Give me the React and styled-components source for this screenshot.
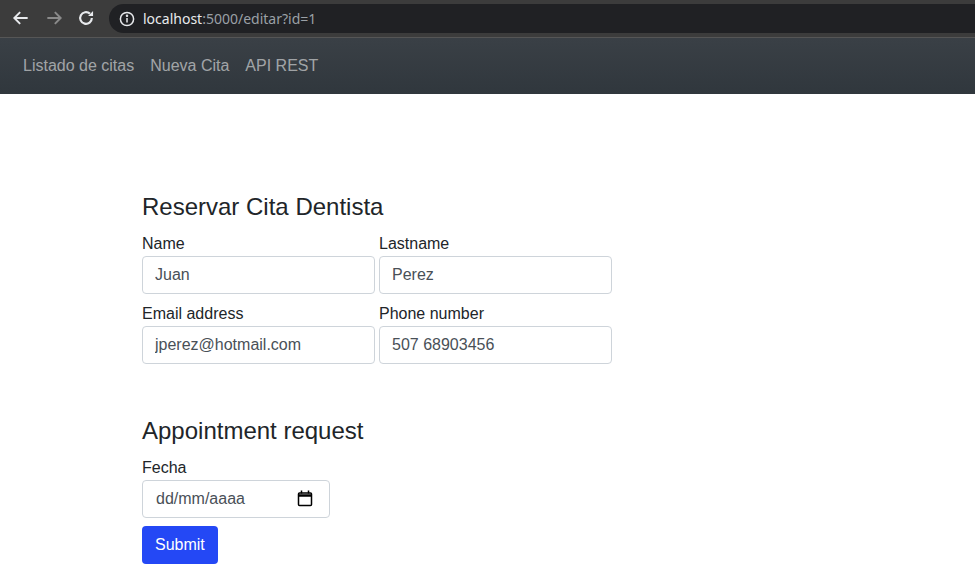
import React from "react";
import styled, { createGlobalStyle } from "styled-components";

const GlobalStyle = createGlobalStyle`
  body {
    margin: 0;
    background: #fff;
    font-family: "Liberation Sans", Arial, sans-serif;
    color: #212529;
  }
`;

const Chrome = styled.div`
  height: 38px;
  background: #3c3c3c;
  border-bottom: 1px solid #565656;
  display: flex;
  align-items: flex-start;
  box-sizing: border-box;
  padding: 4px 0 0 10px;
`;

const NavButton = styled.div`
  width: 22px;
  height: 28px;
  margin-right: ${p => p.$gap || 10}px;
  display: flex;
  align-items: center;
  justify-content: center;
  color: ${p => (p.$dim ? "#8a8a8a" : "#e8eaed")};
`;

const UrlBar = styled.div`
  flex: 1;
  height: 29px;
  background: #202124;
  border-radius: 15px 0 0 15px;
  display: flex;
  align-items: center;
  padding-left: 10px;
  font-family: "Noto Sans", "Open Sans", sans-serif;
  font-size: 14px;
  color: #9aa0a6;
`;

const Host = styled.span`
  color: #e8eaed;
  margin-left: 8px;
`;

const Navbar = styled.nav`
  height: 56px;
  background: linear-gradient(180deg, #3a4046 0%, #30373d 100%);
  display: flex;
  align-items: center;
  padding-left: 15px;
`;

const NavLink = styled.a`
  color: rgba(255, 255, 255, 0.55);
  font-size: 16px;
  padding: 0 8px;
  text-decoration: none;
`;

const Main = styled.main`
  padding: 99px 0 0 142px;
`;

const Heading = styled.h4`
  margin: 0 0 10px;
  font-size: 24px;
  font-weight: 500;
  line-height: 1.2;
`;

const Section = styled.section`
  margin-bottom: ${p => p.$after || 0}px;
`;

const Grid = styled.div`
  display: grid;
  grid-template-columns: 233px 233px;
  column-gap: 4px;
  row-gap: 8px;
`;

const Field = styled.div`
  display: flex;
  flex-direction: column;
`;

const Label = styled.label`
  font-size: 16px;
  line-height: 24px;
`;

const Input = styled.input`
  box-sizing: border-box;
  width: 233px;
  height: 38px;
  padding: 6px 12px;
  font-family: "Liberation Sans", Arial, sans-serif;
  font-size: 16px;
  color: #495057;
  border: 1px solid #ced4da;
  border-radius: 4px;
  background: #fff;
  outline: none;
`;

const DateBox = styled.div`
  box-sizing: border-box;
  width: 188px;
  height: 38px;
  padding: 0 16px 0 13px;
  display: flex;
  align-items: center;
  justify-content: space-between;
  font-size: 16px;
  color: #495057;
  border: 1px solid #ced4da;
  border-radius: 4px;
`;

const SubmitButton = styled.button`
  margin-top: 8px;
  height: 38px;
  padding: 0 13px;
  background: #2448f5;
  color: #fff;
  border: none;
  border-radius: 4px;
  font-family: "Liberation Sans", Arial, sans-serif;
  font-size: 16px;
`;

const Arrow = ({ flip }) => (
  <svg width="20" height="20" viewBox="0 0 24 24" fill="none" stroke="currentColor" strokeWidth="2.3"
    style={flip ? { transform: "scaleX(-1)" } : undefined}>
    <path d="M20 12H5M11 5l-7 7 7 7" />
  </svg>
);

const Reload = () => (
  <svg width="20" height="20" viewBox="0 0 24 24" fill="none" stroke="currentColor" strokeWidth="2.6">
    <path d="M19 12a7 7 0 1 1-2.3-5.2" />
    <path d="M20.5 3.5v6h-6z" fill="currentColor" stroke="none" />
  </svg>
);

const Info = () => (
  <svg width="16" height="16" viewBox="0 0 16 16" fill="none" stroke="#e8eaed" strokeWidth="1.5">
    <circle cx="8" cy="8" r="6.6" />
    <path d="M8 7v4.5" />
    <circle cx="8" cy="4.8" r="0.5" fill="#e8eaed" />
  </svg>
);

const Calendar = () => (
  <svg width="16" height="17" viewBox="0 0 16 17" fill="none" stroke="#000">
    <rect x="1.5" y="3" width="13" height="12.5" rx="1" strokeWidth="1.5" />
    <path d="M1.5 5.5h13" strokeWidth="2.5" />
    <path d="M4.5 0.5v3M11.5 0.5v3" strokeWidth="1.5" />
  </svg>
);

export default function App() {
  return (
    <>
      <GlobalStyle />
      <Chrome>
        <NavButton $gap={11}><Arrow /></NavButton>
        <NavButton $dim $gap={10}><Arrow flip /></NavButton>
        <NavButton $gap={12}><Reload /></NavButton>
        <UrlBar>
          <Info />
          <Host>localhost</Host>:5000/editar?id=1
        </UrlBar>
      </Chrome>
      <Navbar>
        <NavLink href="#">Listado de citas</NavLink>
        <NavLink href="#">Nueva Cita</NavLink>
        <NavLink href="#">API REST</NavLink>
      </Navbar>
      <Main>
        <Section $after={53}>
          <Heading>Reservar Cita Dentista</Heading>
          <Grid>
            <Field>
              <Label>Name</Label>
              <Input defaultValue="Juan" />
            </Field>
            <Field>
              <Label>Lastname</Label>
              <Input defaultValue="Perez" />
            </Field>
            <Field>
              <Label>Email address</Label>
              <Input defaultValue="jperez@hotmail.com" />
            </Field>
            <Field>
              <Label>Phone number</Label>
              <Input defaultValue="507 68903456" />
            </Field>
          </Grid>
        </Section>
        <Section>
          <Heading>Appointment request</Heading>
          <Field>
            <Label>Fecha</Label>
            <DateBox>
              <span>dd/mm/aaaa</span>
              <Calendar />
            </DateBox>
          </Field>
          <SubmitButton>Submit</SubmitButton>
        </Section>
      </Main>
    </>
  );
}
